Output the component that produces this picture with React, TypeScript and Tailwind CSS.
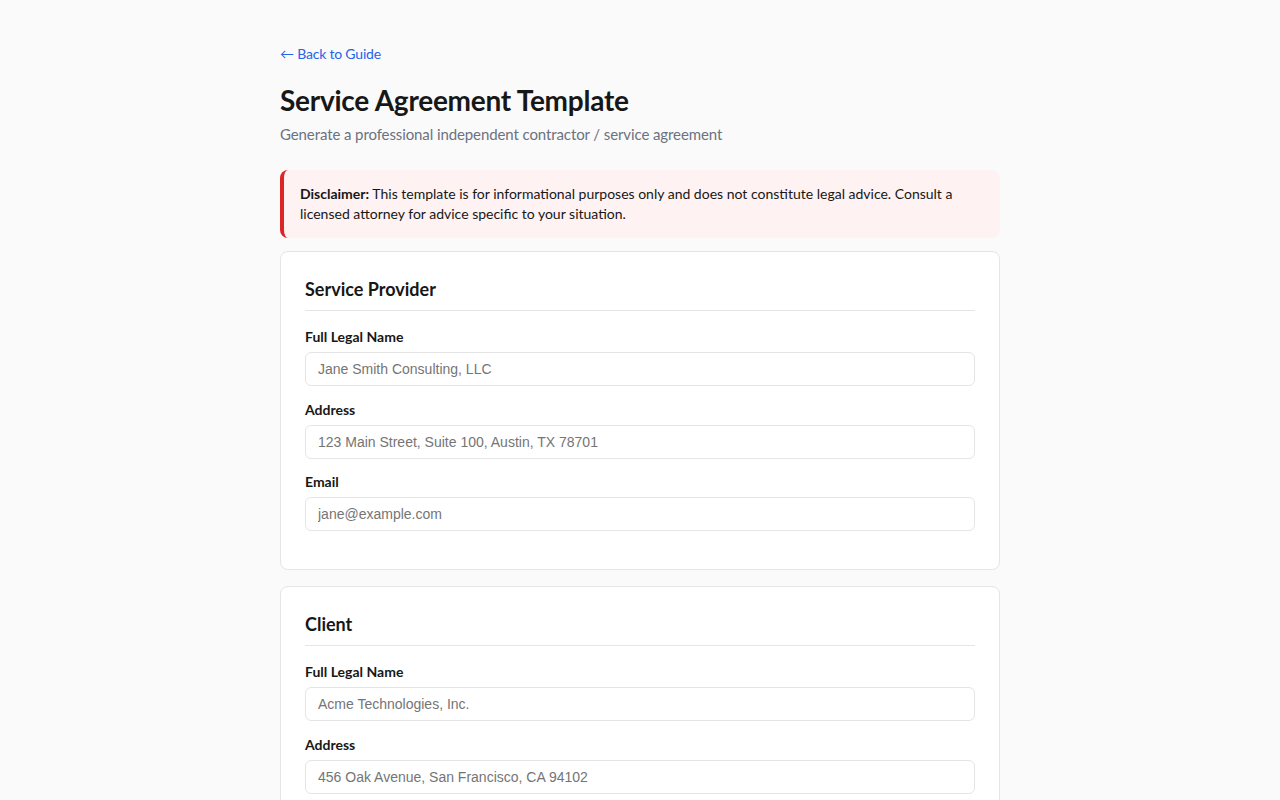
import { useState } from 'react';

interface Field {
  label: string;
  placeholder: string;
  type?: string;
}

interface Section {
  title: string;
  fields: Field[];
}

const sections: Section[] = [
  {
    title: 'Service Provider',
    fields: [
      { label: 'Full Legal Name', placeholder: 'Jane Smith Consulting, LLC' },
      { label: 'Address', placeholder: '123 Main Street, Suite 100, Austin, TX 78701' },
      { label: 'Email', placeholder: 'jane@example.com', type: 'email' },
    ],
  },
  {
    title: 'Client',
    fields: [
      { label: 'Full Legal Name', placeholder: 'Acme Technologies, Inc.' },
      { label: 'Address', placeholder: '456 Oak Avenue, San Francisco, CA 94102' },
      { label: 'Email', placeholder: 'legal@acme.com', type: 'email' },
    ],
  },
];

function FormCard({ section }: { section: Section }) {
  const [values, setValues] = useState<Record<string, string>>({});

  return (
    <div className="bg-white border border-[#e5e5e5] rounded-lg px-6 pt-6 pb-[24.5px]">
      <h2 className="text-[18px] leading-[26px] font-bold text-[#171717] pb-2 mb-4 border-b border-[#e5e5e5]">
        {section.title}
      </h2>
      {section.fields.map((field) => (
        <div key={field.label} className="mb-[13.5px]">
          <label className="block text-[14px] leading-5 font-bold text-[#171717] mb-[5px]">
            {field.label}
          </label>
          <input
            type={field.type ?? 'text'}
            value={values[field.label] ?? ''}
            onChange={(e) => setValues((prev) => ({ ...prev, [field.label]: e.target.value }))}
            placeholder={field.placeholder}
            className="w-full h-[34px] px-3 border border-[#e5e5e5] rounded-md text-[14px] text-[#171717] placeholder:text-[#757575] font-['Liberation_Sans',Arial,sans-serif] focus:outline-none"
          />
        </div>
      ))}
    </div>
  );
}

export default function App() {
  return (
    <div className="min-h-screen bg-[#fafafa] font-['Lato','Noto_Sans',sans-serif] text-[#171717]">
      <div className="max-w-[720px] mx-auto pt-[41px] pb-10">
        <a href="#" className="inline-block text-[14px] leading-5 text-[#2563eb] tracking-[-0.2px] mb-[18px]">
          ← Back to Guide
        </a>
        <h1 className="text-[28px] leading-9 font-bold text-[#171717] tracking-[-0.25px]">Service Agreement Template</h1>
        <p className="mt-1 text-[15px] leading-6 text-[#6b7280] tracking-[-0.1px] mb-6">
          Generate a professional independent contractor / service agreement
        </p>

        <div className="bg-[#fef2f2] border-l-4 border-[#dc2626] rounded-lg pl-4 pr-5 py-[14px] text-[14px] leading-5 text-[#171717] mb-[13px]">
          <strong className="font-bold">Disclaimer:</strong> This template is for informational purposes only and
          does not constitute legal advice. Consult a licensed attorney for advice specific to your situation.
        </div>

        <div className="flex flex-col gap-4">
          {sections.map((s) => (
            <FormCard key={s.title} section={s} />
          ))}
        </div>
      </div>
    </div>
  );
}
